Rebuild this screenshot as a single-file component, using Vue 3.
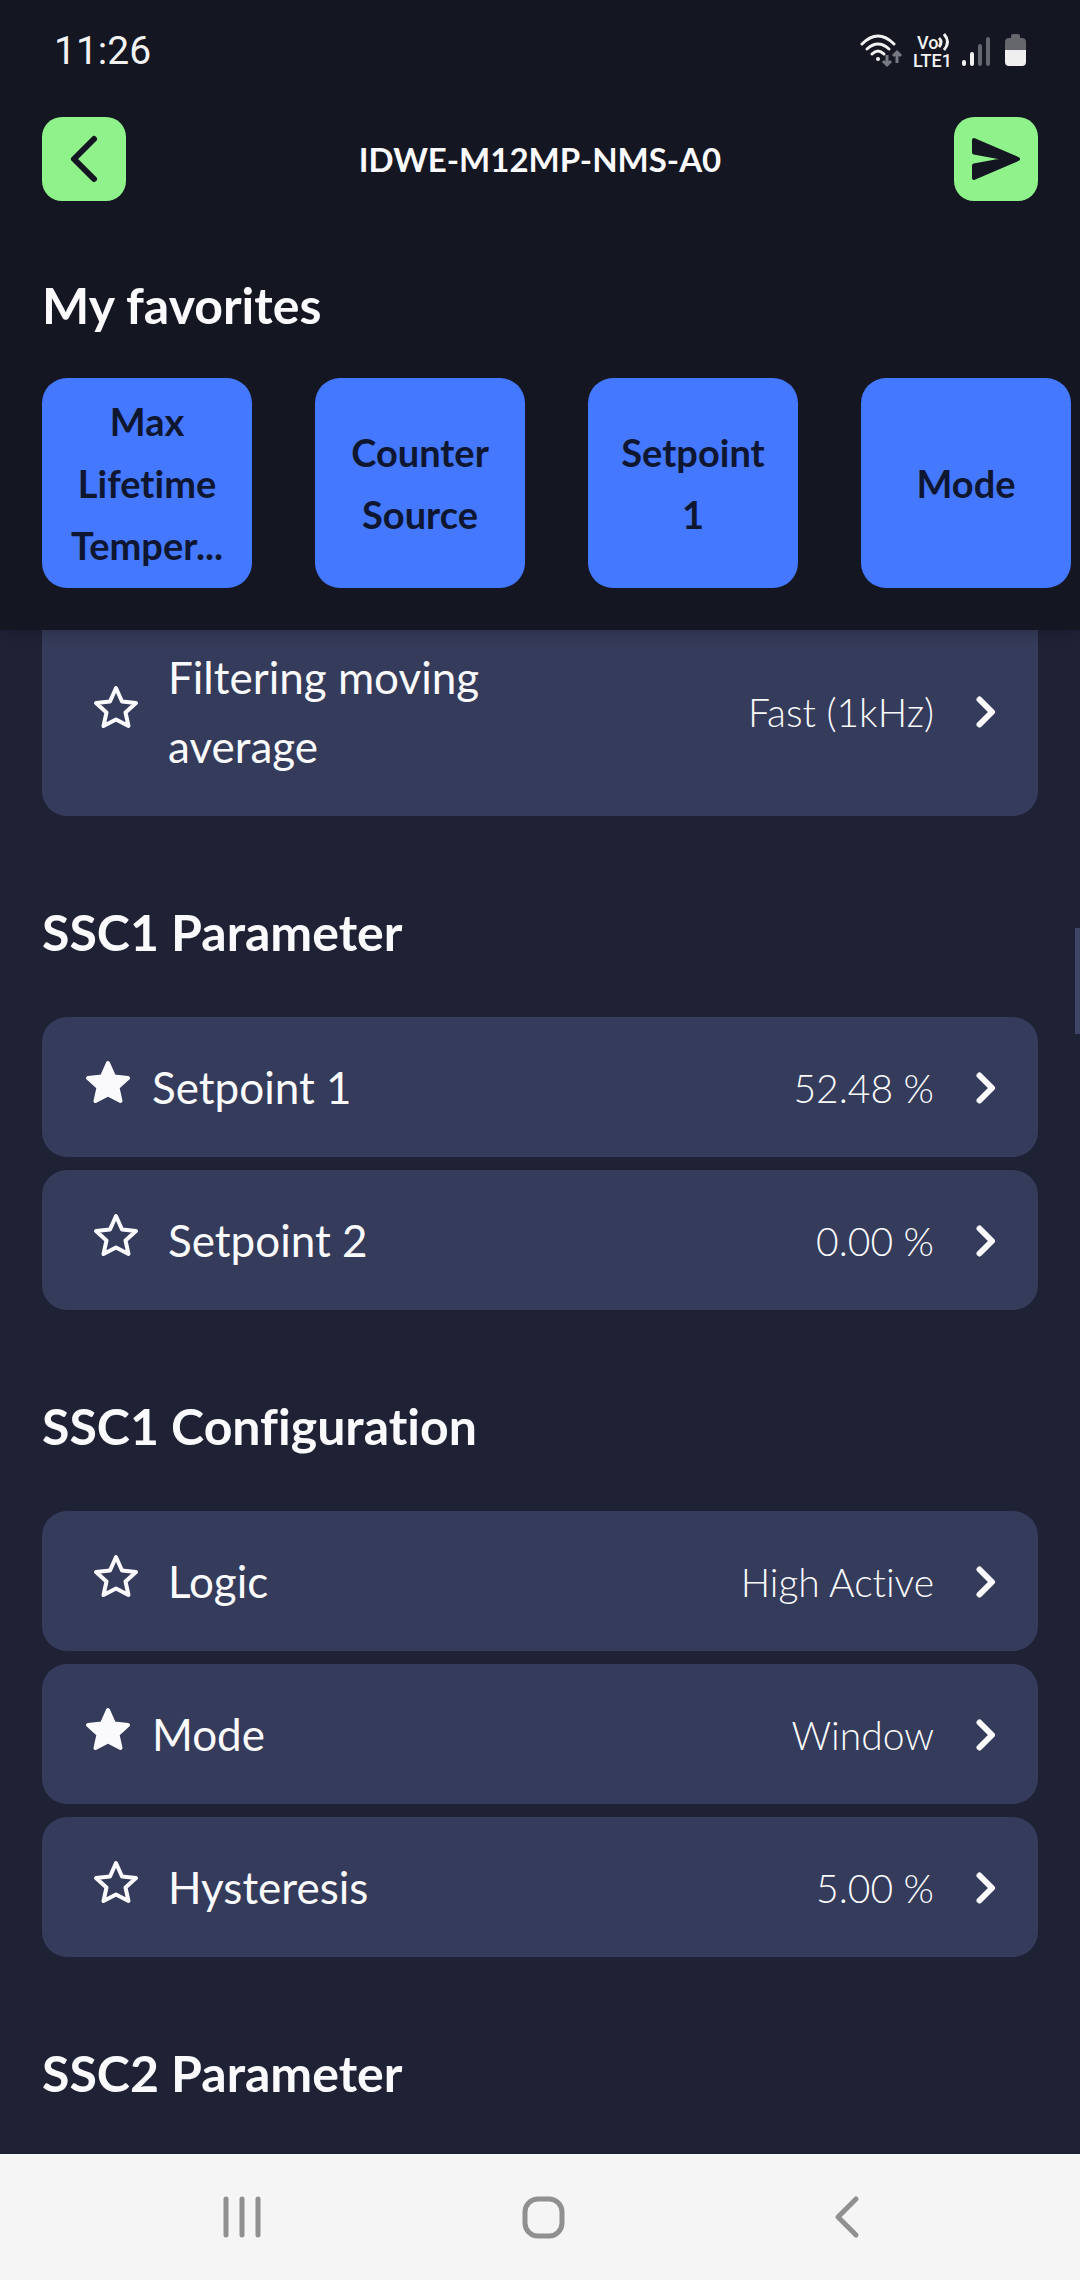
<script setup>
import { ref } from 'vue'

const favorites = [
  ['Max', 'Lifetime', 'Temper...'],
  ['Counter', 'Source'],
  ['Setpoint', '1'],
  ['Mode'],
]

const sections = ref([
  {
    title: '',
    rows: [{ label: 'Filtering moving average', value: 'Fast (1kHz)', favorite: false }],
  },
  {
    title: 'SSC1 Parameter',
    rows: [
      { label: 'Setpoint 1', value: '52.48 %', favorite: true },
      { label: 'Setpoint 2', value: '0.00 %', favorite: false },
    ],
  },
  {
    title: 'SSC1 Configuration',
    rows: [
      { label: 'Logic', value: 'High Active', favorite: false },
      { label: 'Mode', value: 'Window', favorite: true },
      { label: 'Hysteresis', value: '5.00 %', favorite: false },
    ],
  },
  { title: 'SSC2 Parameter', rows: [] },
])
</script>

<template>
  <div class="app">
    <header class="header">
      <div class="status">
        <time class="clock">11:26</time>
        <svg class="indicators" width="168" height="48" viewBox="0 -6 168 48" aria-hidden="true">
          <g fill="none" stroke="#f2f2f2" stroke-width="3" stroke-linecap="round">
            <path d="M2 11 Q18 -5 34 11" />
            <path d="M7 16 Q18 6 29 16" />
            <path d="M12 21 Q18 15 24 21" />
          </g>
          <circle cx="18" cy="26" r="2" fill="#f2f2f2" />
          <g fill="none" stroke="#777983" stroke-width="3">
            <path d="M27 22v10M23 28l4 4l4-4M37 30v-11M33 23l4-4l4 4" />
          </g>
          <text x="57" y="16" class="net">Vo</text>
          <text x="53" y="34" class="net">LTE1</text>
          <g fill="none" stroke="#f2f2f2" stroke-width="3">
            <path d="M79 5q4 4 0 9M84 1q7 8 0 16" />
          </g>
          <g stroke-width="4" stroke-linecap="round">
            <path d="M104 29v2M112 21v10" stroke="#f2f2f2" />
            <path d="M120 13v18M128 6v25" stroke="#63656f" />
          </g>
          <path d="M151 3q0-2 2-2h5q2 0 2 2v2h2q4 0 4 4v9h-21v-9q0-4 4-4h2z" fill="#66676d" />
          <path d="M145 17h21v12q0 4-4 4h-13q-4 0-4-4z" fill="#efefef" />
        </svg>
      </div>

      <div class="toolbar">
        <button class="tool" type="button" aria-label="Back">
          <svg width="84" height="84" viewBox="0 0 84 84">
            <path d="M52 22L32 42L52 62" fill="none" stroke="#141722" stroke-width="6" stroke-linecap="round" stroke-linejoin="round" />
          </svg>
        </button>
        <h1 class="title">IDWE-M12MP-NMS-A0</h1>
        <button class="tool" type="button" aria-label="Send">
          <svg width="84" height="84" viewBox="0 0 84 84">
            <path d="M20 23L64 42L20 61V48.5L55 42L20 35.5Z" fill="#141722" stroke="#141722" stroke-width="4" stroke-linejoin="round" />
          </svg>
        </button>
      </div>

      <h2 class="heading">My favorites</h2>
      <div class="favorites">
        <button v-for="lines in favorites" :key="lines[0]" class="tile" type="button">
          <span v-for="line in lines" :key="line" class="tile-line">{{ line }}</span>
        </button>
      </div>
    </header>

    <main class="content">
      <div class="list">
        <section v-for="section in sections" :key="section.title">
          <h2 v-if="section.title" class="heading section-heading">{{ section.title }}</h2>
          <div class="rows">
            <div v-for="row in section.rows" :key="row.label" class="row">
              <button
                class="star"
                :class="{ active: row.favorite }"
                type="button"
                :aria-pressed="row.favorite"
                :aria-label="'Favorite ' + row.label"
                @click="row.favorite = !row.favorite"
              >
                <svg width="46" height="44" viewBox="0 0 46 44">
                  <path
                    d="M23 3L29 16.5L43 18L32.5 27.5L35.5 41L23 34.5L10.5 41L13.5 27.5L3 18L17 16.5Z"
                    :fill="row.favorite ? '#fafafc' : 'none'"
                    stroke="#fafafc"
                    stroke-width="4"
                    stroke-linejoin="round"
                  />
                </svg>
              </button>
              <button class="entry" type="button">
                <span class="label">{{ row.label }}</span>
                <span class="value">{{ row.value }}</span>
                <svg width="20" height="32" viewBox="0 0 20 32">
                  <path d="M3.5 3.5L16 16L3.5 28.5" fill="none" stroke="#fafafc" stroke-width="6" stroke-linecap="round" stroke-linejoin="round" />
                </svg>
              </button>
            </div>
          </div>
        </section>
      </div>
      <div class="thumb"></div>
    </main>

    <nav class="navbar">
      <button type="button" aria-label="Recent apps">
        <svg width="44" height="44" viewBox="0 0 44 44">
          <path d="M6 4v36M22 4v36M38 4v36" stroke="#909090" stroke-width="5" stroke-linecap="round" />
        </svg>
      </button>
      <button type="button" aria-label="Home">
        <svg width="44" height="44" viewBox="0 0 44 44">
          <rect x="3" y="4" width="37" height="37" rx="13" fill="none" stroke="#909090" stroke-width="5" />
        </svg>
      </button>
      <button type="button" aria-label="Back">
        <svg width="44" height="44" viewBox="0 0 44 44">
          <path d="M31 4L13 22L31 40" fill="none" stroke="#909090" stroke-width="5" stroke-linecap="round" stroke-linejoin="round" />
        </svg>
      </button>
    </nav>
  </div>
</template>

<style>
body {
  margin: 0;
  background: #1f2135;
}
</style>

<style scoped>
.app {
  display: flex;
  flex-direction: column;
  height: 100vh;
  overflow: hidden;
  background: #1f2135;
  color: #fafafc;
  font-family: Lato, "Noto Sans", sans-serif;
  font-variant-ligatures: none;
}
button {
  padding: 0;
  border: 0;
  background: none;
  color: inherit;
  font: inherit;
  font-variant-ligatures: none;
  cursor: pointer;
}
svg {
  display: block;
  flex: none;
}
h1,
h2 {
  margin: 0;
}
.header {
  position: relative;
  z-index: 1;
  flex: none;
  padding-bottom: 42px;
  background: #141622;
  box-shadow: 0 2px 12px rgba(20, 22, 34, 0.4);
}
.status {
  display: flex;
  align-items: center;
  justify-content: space-between;
  height: 101px;
  padding: 0 52px 0 54px;
}
.clock {
  color: #f2f2f2;
  font: 400 39px/48px Roboto, sans-serif;
}
.net {
  fill: #f2f2f2;
  font: 500 18px Roboto, sans-serif;
}
.toolbar {
  display: flex;
  align-items: center;
  justify-content: space-between;
  margin-top: 16px;
  padding: 0 42px;
}
.tool {
  border-radius: 20px;
  background: #90f28a;
}
.title {
  font-size: 33px;
  font-weight: 700;
  line-height: 48px;
}
.heading {
  font-size: 50px;
  font-weight: 700;
  line-height: 60px;
}
.header .heading {
  margin: 74px 42px 43px;
}
.favorites {
  display: flex;
  gap: 63px;
  padding-left: 42px;
  overflow: hidden;
}
.tile {
  display: flex;
  flex: none;
  flex-direction: column;
  align-items: center;
  justify-content: center;
  width: 210px;
  height: 210px;
  border-radius: 25px;
  background: #4478ff;
  color: #0f1630;
  font-size: 38px;
  font-weight: 700;
  line-height: 62px;
}
.content {
  position: relative;
  flex: 1;
  min-height: 0;
  overflow: hidden;
}
.list {
  margin: -23px 42px 0;
}
.section-heading {
  padding: 86px 0 55px;
}
.rows {
  display: flex;
  flex-direction: column;
  gap: 13px;
}
.row {
  display: flex;
  align-items: center;
  gap: 29px;
  padding: 0 42px 0 51px;
  border-radius: 25px;
  background: #353b5a;
}
.star {
  padding-bottom: 10px;
}
.star.active {
  margin: 0 -8px;
}
.entry {
  display: flex;
  flex: 1;
  align-items: center;
  padding: 36px 0 35px;
  text-align: left;
}
.label {
  max-width: 400px;
  font-size: 44px;
  line-height: 69px;
}
.value {
  margin: 0 42px 0 auto;
  font-size: 39px;
  font-weight: 300;
  line-height: 48px;
}
.thumb {
  position: absolute;
  top: 298px;
  right: 0;
  width: 5px;
  height: 106px;
  background: #3e4464;
}
.navbar {
  display: flex;
  flex: none;
  height: 126px;
  padding: 0 82px 0 91px;
  background: #f5f5f5;
}
.navbar button {
  display: flex;
  flex: 1;
  align-items: center;
  justify-content: center;
}
</style>
